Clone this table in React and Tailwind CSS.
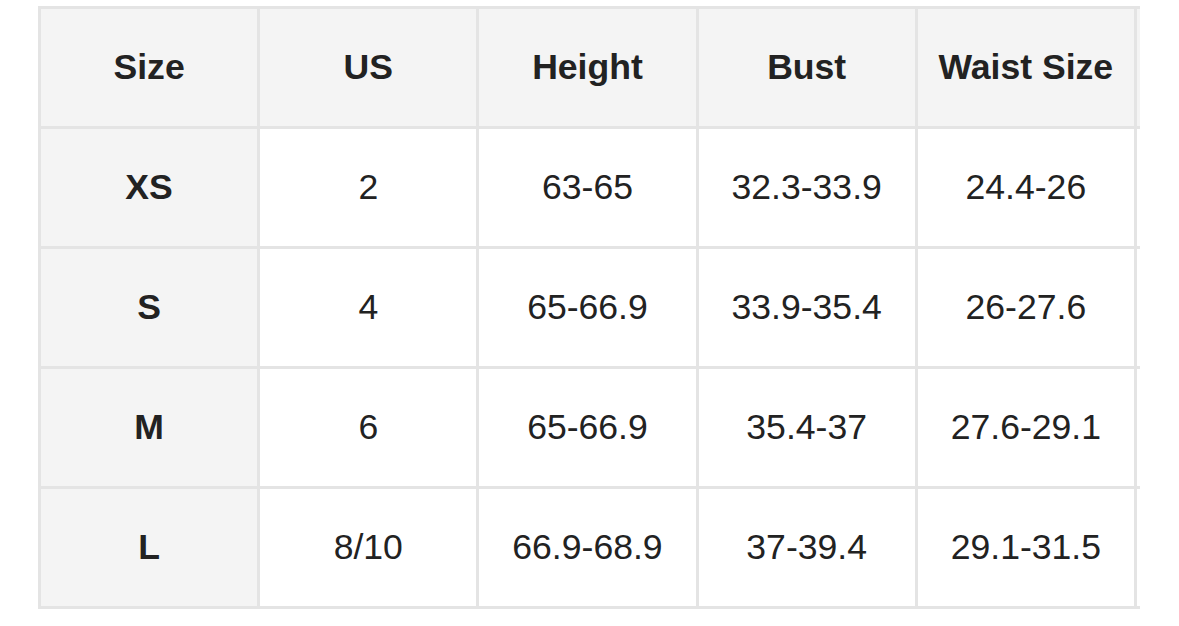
const HEAD = ['Size', 'US', 'Height', 'Bust', 'Waist Size', ''];
const ROWS = [
  ['XS', '2', '63-65', '32.3-33.9', '24.4-26', ''],
  ['S', '4', '65-66.9', '33.9-35.4', '26-27.6', ''],
  ['M', '6', '65-66.9', '35.4-37', '27.6-29.1', ''],
  ['L', '8/10', '66.9-68.9', '37-39.4', '29.1-31.5', ''],
];

export default function App() {
  return (
    <div className="w-[1179px] h-[626px] bg-white pt-[6px] pl-[38px] font-['Liberation_Sans',Arial,sans-serif] text-[#222]">
      {/* the table runs on past the right edge, cut off like the photo */}
      <div className="w-[1102px] overflow-hidden">
        <div className="grid w-max grid-cols-[repeat(5,216.2px)_120px] auto-rows-[117px] gap-[3px] p-[3px] bg-[#e4e4e4]">
          {HEAD.map((h, i) => (
            <div key={i} className="flex items-center justify-center bg-[#f4f4f4] text-[35.6px] font-bold">
              {h}
            </div>
          ))}
          {ROWS.map((r) =>
            r.map((c, i) => (
              <div
                key={r[0] + i}
                className={`flex items-center justify-center text-[35.6px] ${
                  i === 0 ? 'bg-[#f4f4f4] font-bold' : 'bg-white'
                }`}
              >
                {c}
              </div>
            ))
          )}
        </div>
      </div>
    </div>
  );
}
